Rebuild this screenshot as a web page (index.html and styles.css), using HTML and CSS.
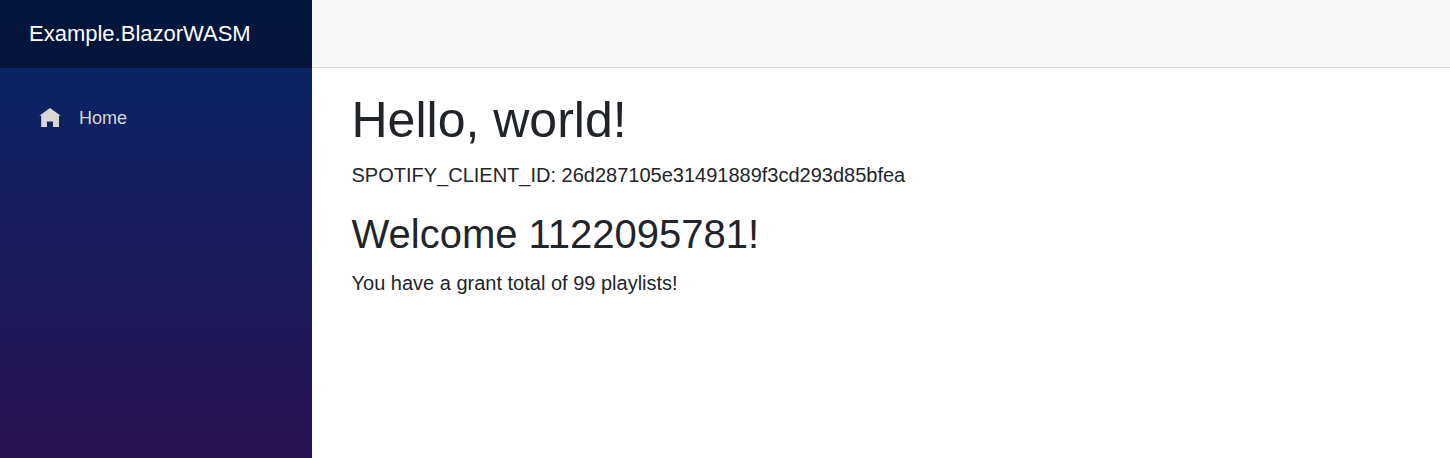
FILE: index.html
```html
<!DOCTYPE html>
<html lang="en">
<head>
<meta charset="utf-8">
<title>Example.BlazorWASM</title>
<link rel="stylesheet" href="styles.css">
</head>
<body>
<div class="page">
  <div class="sidebar">
    <div class="brand-row"><a class="brand">Example.BlazorWASM</a></div>
    <nav class="nav">
      <a class="nav-link">
        <svg class="home-icon" viewBox="0 0 22 22" aria-hidden="true"><path d="M11 1L.3 8.8H2.2V20H8V14.400H14V20H20V8.800H21.800z"/></svg>
        <span>Home</span>
      </a>
    </nav>
  </div>
  <main class="main">
    <div class="top-row"></div>
    <article class="content">
      <h1>Hello, world!</h1>
      <p>SPOTIFY_CLIENT_ID: 26d287105e31491889f3cd293d85bfea</p>
      <h2>Welcome 1122095781!</h2>
      <p>You have a grant total of 99 playlists!</p>
    </article>
  </main>
</div>
</body>
</html>
```
FILE: styles.css
```css
* { box-sizing: border-box; }
body {
  margin: 0;
  font-family: "Liberation Sans", Arial, sans-serif;
  font-size: 20px;
  line-height: 30px;
  color: #212529;
  background: #fff;
}
.page { display: flex; height: 458px; overflow: hidden; }
.sidebar {
  width: 312px;
  flex: none;
  background: linear-gradient(180deg, rgb(5, 39, 103) 0, #3a0647 690px);
}
.brand-row {
  height: 68px;
  padding-left: 29px;
  display: flex;
  align-items: center;
  background: rgba(0, 0, 0, 0.4);
}
.brand { color: #fff; font-size: 22px; }
.nav { padding: 20px 20px 0; }
.nav-link {
  display: flex;
  align-items: center;
  gap: 18px;
  height: 60px;
  padding-left: 19px;
  color: #d7d7d7;
  font-size: 18px;
}
.home-icon { width: 22px; height: 22px; fill: currentColor; }
.main { flex: 1; }
.top-row {
  height: 68px;
  background: #f7f7f7;
  border-bottom: 1px solid #d6d5d5;
}
.content { padding: 22px 40px 0 39.5px; }
h1, h2 { font-weight: 500; margin: 0 0 10px; line-height: 1.2; }
h1 { font-size: 50px; }
h2 { font-size: 40px; }
p { margin: 0 0 20px; }
```
